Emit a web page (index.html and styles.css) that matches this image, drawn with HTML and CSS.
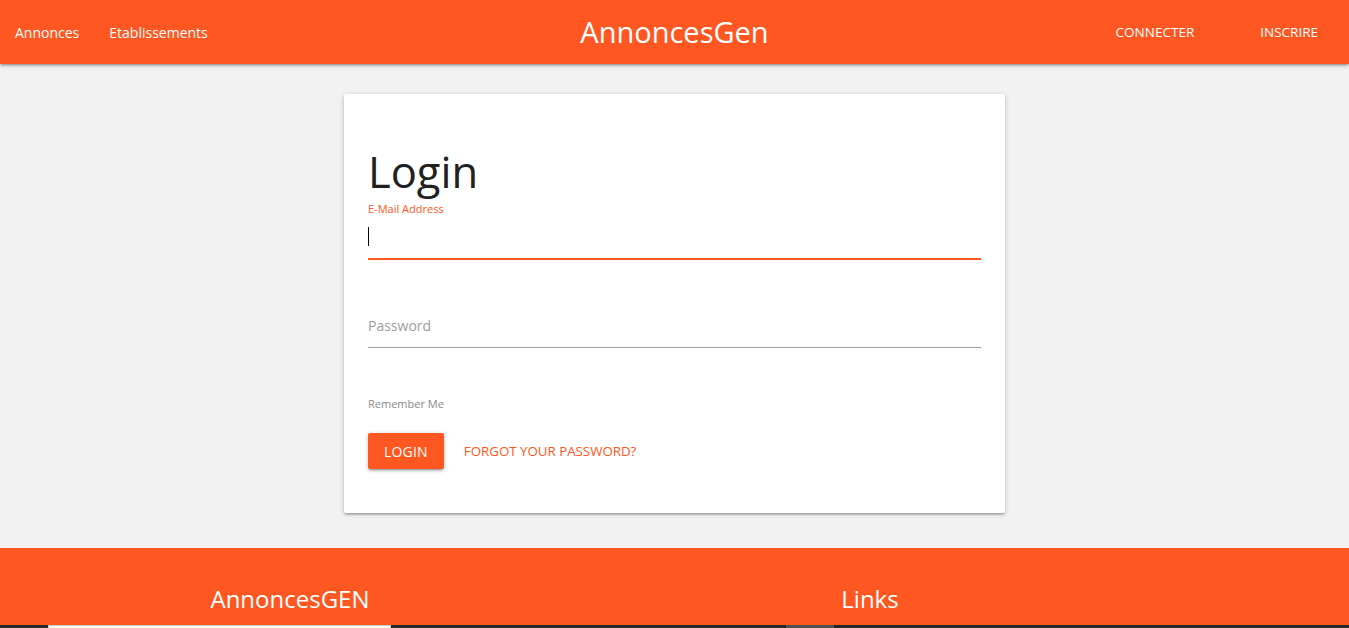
FILE: index.html
```html
<!DOCTYPE html>
<html lang="fr">
<head>
<meta charset="utf-8">
<title>AnnoncesGen - Login</title>
<link rel="stylesheet" href="styles.css">
</head>
<body>
<header class="nav">
  <ul class="nav-left">
    <li><a href="#">Annonces</a></li>
    <li><a href="#">Etablissements</a></li>
  </ul>
  <a class="brand" href="#">AnnoncesGen</a>
  <ul class="nav-right">
    <li><a href="#">CONNECTER</a></li>
    <li><a href="#">INSCRIRE</a></li>
  </ul>
</header>

<main class="main">
  <section class="card">
    <h1 class="title">Login</h1>
    <div class="field">
      <label class="label active" for="email">E-Mail Address</label>
      <div class="input-wrap">
        <input class="input focused" id="email" type="email">
        <span class="caret"></span>
      </div>
    </div>
    <div class="field field-pw">
      <input class="input" id="password" type="password" placeholder="Password">
    </div>
    <div class="remember">Remember Me</div>
    <div class="actions">
      <button class="btn" type="submit">LOGIN</button>
      <a class="forgot" href="#">FORGOT YOUR PASSWORD?</a>
    </div>
  </section>
</main>

<footer class="footer">
  <div class="footer-cols">
    <h2 class="footer-title col-a">AnnoncesGEN</h2>
    <h2 class="footer-title col-b">Links</h2>
  </div>
</footer>
<div class="bottom">
  <div class="bottom-box light"></div>
  <div class="bottom-box grey"></div>
</div>
</body>
</html>
```

FILE: styles.css
```css
* { box-sizing: border-box; }
html, body { margin: 0; padding: 0; }
body {
  background: #f2f2f2;
  font-family: "Open Sans", "Noto Sans", sans-serif;
  color: #212121;
  overflow: hidden;
}
a { text-decoration: none; }
ul { list-style: none; margin: 0; padding: 0; }

.nav {
  height: 64px;
  background: #ff5722;
  display: grid;
  grid-template-columns: 1fr auto 1fr;
  align-items: center;
  box-shadow: 0 2px 2px 0 rgba(0,0,0,0.14), 0 3px 1px -2px rgba(0,0,0,0.12), 0 1px 5px 0 rgba(0,0,0,0.2);
  position: relative;
  z-index: 2;
}
.nav-left, .nav-right { display: flex; }
.nav-right { justify-content: flex-end; padding-right: 31px; }
.nav a { color: #fff; }
.nav-left a { display: block; padding: 0 15px; font-size: 14px; }
.nav-right a { display: block; padding: 0 0 0 66px; font-size: 13.5px; }
.brand { font-size: 29px; line-height: 64px; }

.main { padding-top: 30px; padding-bottom: 35px; }
.card {
  width: 661px;
  margin: 0 auto;
  background: #fff;
  padding: 24px 24px 44px;
  box-shadow: 0 2px 2px 0 rgba(0,0,0,0.14), 0 3px 1px -2px rgba(0,0,0,0.12), 0 1px 5px 0 rgba(0,0,0,0.2);
  border-radius: 2px;
}
.title {
  margin: 26px 0 0;
  font-weight: 400;
  font-size: 43.5px;
  line-height: 56px;
  color: #212121;
}
.label {
  display: block;
  margin-top: 2px;
  font-size: 11px;
  line-height: 14px;
  color: #9e9e9e;
}
.label.active { color: #ff5722; }
.input-wrap { position: relative; }
.input {
  display: block;
  width: 100%;
  height: 45px;
  border: none;
  border-bottom: 1px solid #9e9e9e;
  outline: none;
  background: transparent;
  padding: 0;
  font-family: inherit;
  font-size: 14px;
  color: #212121;
}
.input.focused { height: 43px; }
.input::placeholder { color: #9e9e9e; }
.input.focused {
  border-bottom: 1px solid #ff5722;
  box-shadow: 0 1px 0 0 #ff5722;
}
.caret {
  position: absolute;
  left: 0;
  top: 11px;
  width: 1px;
  height: 19px;
  background: #000;
}
.field-pw { margin-top: 44px; }
.remember {
  margin-top: 49px;
  font-size: 11px;
  line-height: 14px;
  color: #8a8a8a;
}
.actions {
  margin-top: 22px;
  display: flex;
  align-items: center;
  gap: 20px;
}
.btn {
  height: 36px;
  padding: 0 16px;
  border: none;
  border-radius: 2px;
  background: #ff5722;
  color: #fff;
  font-family: inherit;
  font-size: 14px;
  letter-spacing: 0.2px;
  box-shadow: 0 2px 2px 0 rgba(0,0,0,0.14), 0 3px 1px -2px rgba(0,0,0,0.12), 0 1px 5px 0 rgba(0,0,0,0.2);
}
.forgot { color: #ff5722; font-size: 13.3px; }

.footer {
  background: #ff5722;
  height: 77px;
}
.footer-cols {
  display: grid;
  grid-template-columns: 580px 1fr;
}
.footer-title {
  margin: 0;
  padding-top: 35px;
  font-weight: 400;
  font-size: 24px;
  line-height: 32px;
  color: #fff;
  text-align: center;
}
.col-a { width: 580px; }
.col-b { width: 580px; }
.bottom {
  height: 20px;
  background: #262626;
  display: flex;
  padding-left: 48px;
}
.bottom-box.light {
  width: 343px;
  height: 20px;
  background: #fafafa;
  border: 1px solid #ccc;
}
.bottom-box.grey {
  margin-left: 395px;
  width: 48px;
  height: 20px;
  background: #4f4f4f;
}
```
